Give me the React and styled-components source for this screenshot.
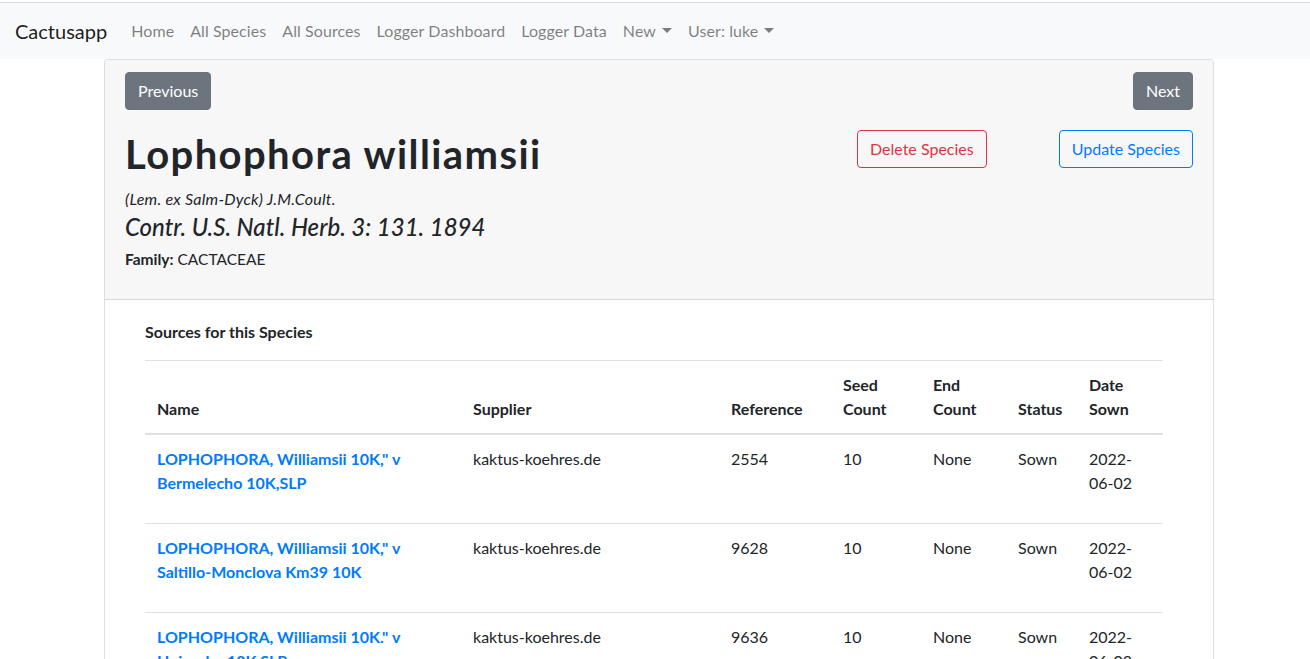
import React from "react";
import styled, { createGlobalStyle, css } from "styled-components";

const Global = createGlobalStyle`
  html, body { margin: 0; padding: 0; background: #fff; }
  body {
    font-family: Lato, "Noto Sans", "Liberation Sans", sans-serif;
    font-size: 16px;
    line-height: 1.5;
    color: #212529;
  }
  * { box-sizing: border-box; }
`;

const TopRule = styled.div`
  height: 3px;
  border-bottom: 1px solid #dcdcdc;
  background: #fff;
`;

const Navbar = styled.nav`
  display: flex;
  align-items: center;
  height: 56px;
  padding: 8px 16px 8px 15px;
  background: #f8f9fa;
`;

const Brand = styled.a`
  font-size: 20px;
  line-height: 30px;
  color: rgba(0, 0, 0, 0.9);
  margin-right: 16px;
  text-decoration: none;
`;

const NavList = styled.div`
  display: flex;
  align-items: center;
`;

const NavLink = styled.a`
  padding: 8px;
  color: rgba(0, 0, 0, 0.5);
  text-decoration: none;
  white-space: nowrap;
  display: inline-flex;
  align-items: center;
  letter-spacing: 0.08px;
`;

const Caret = styled.span`
  display: inline-block;
  margin-left: 6px;
  border-top: 5px solid;
  border-left: 5px solid transparent;
  border-right: 5px solid transparent;
  height: 0;
  width: 0;
  position: relative;
  top: -1px;
`;

const Container = styled.main`
  width: 1110px;
  margin-left: 104px;
`;

const Card = styled.section`
  border: 1px solid rgba(0, 0, 0, 0.125);
  border-radius: 4px;
  background: #fff;
  overflow: hidden;
`;

const CardHeader = styled.header`
  background: #f7f7f7;
  border-bottom: 1px solid rgba(0, 0, 0, 0.125);
  padding: 12px 20px 12px 20px;
`;

const NavRow = styled.div`
  display: flex;
  justify-content: space-between;
`;

const Button = styled.button`
  font-family: inherit;
  font-size: 16px;
  line-height: 24px;
  padding: 6px 12px;
  border-radius: 4px;
  border: 1px solid transparent;
  cursor: pointer;
  ${(p) =>
    p.$variant === "secondary" &&
    css`
      background: #6c757d;
      border-color: #6c757d;
      color: #fff;
    `}
  ${(p) =>
    p.$variant === "outline-danger" &&
    css`
      background: transparent;
      border-color: #dc3545;
      color: #dc3545;
    `}
  ${(p) =>
    p.$variant === "outline-primary" &&
    css`
      background: transparent;
      border-color: #007bff;
      color: #007bff;
    `}
`;

const TitleRow = styled.div`
  display: grid;
  grid-template-columns: 732px 153px 183px;
  margin-top: 20px;
`;

const TitleCol = styled.div``;

const ActionCol = styled.div`
  display: flex;
  justify-content: ${(p) => (p.$end ? "flex-end" : "flex-start")};
  align-items: flex-start;
`;

const Title = styled.h1`
  margin: 0;
  font-size: 40px;
  line-height: 48px;
  font-weight: 700;
  letter-spacing: 1.4px;
  color: #212529;
`;

const Author = styled.p`
  margin: 10px 0 0;
  font-size: 16px;
  line-height: 21px;
  font-style: italic;
  letter-spacing: 0.25px;
`;

const Publication = styled.h4`
  margin: 3px 0 8px;
  font-size: 24px;
  line-height: 29px;
  font-weight: 500;
  font-style: italic;
`;

const Family = styled.p`
  margin: 0 0 17px;
  font-size: 15.5px;
  line-height: 21px;
`;

const CardBody = styled.div`
  padding: 20px 49px 20px 40px;
`;

const SectionTitle = styled.h6`
  margin: 0 0 16px;
  font-size: 16px;
  line-height: 24px;
  font-weight: 700;
`;

const Table = styled.table`
  width: 1018px;
  border-collapse: collapse;
  table-layout: fixed;
`;

const Th = styled.th`
  text-align: left;
  vertical-align: bottom;
  padding: 12px;
  font-weight: 700;
  border-top: 1px solid #dee2e6;
  border-bottom: 2px solid #dee2e6;
  width: ${(p) => p.$w}px;
`;

const Td = styled.td`
  vertical-align: top;
  padding: 12px;
  border-top: 1px solid #dee2e6;
  font-size: 16px;
`;

const NameLink = styled.a`
  display: block;
  margin-bottom: 16px;
  color: #007bff;
  font-weight: 700;
  text-decoration: none;
`;

const columns = [
  { label: "Name", w: 316 },
  { label: "Supplier", w: 258 },
  { label: "Reference", w: 112 },
  { label: "Seed Count", w: 90 },
  { label: "End Count", w: 85 },
  { label: "Status", w: 71 },
  { label: "Date Sown", w: 86 },
];

const rows = [
  {
    name: 'LOPHOPHORA, Williamsii 10K," v Bermelecho 10K,SLP',
    supplier: "kaktus-koehres.de",
    ref: "2554",
  },
  {
    name: 'LOPHOPHORA, Williamsii 10K," v Saltillo-Monclova Km39 10K',
    supplier: "kaktus-koehres.de",
    ref: "9628",
  },
  {
    name: 'LOPHOPHORA, Williamsii 10K." v Huizache 10K,SLP',
    supplier: "kaktus-koehres.de",
    ref: "9636",
  },
];

export default function App() {
  return (
    <>
      <Global />
      <TopRule />
      <Navbar>
        <Brand href="#">Cactusapp</Brand>
        <NavList>
          <NavLink href="#">Home</NavLink>
          <NavLink href="#">All Species</NavLink>
          <NavLink href="#">All Sources</NavLink>
          <NavLink href="#">Logger Dashboard</NavLink>
          <NavLink href="#">Logger Data</NavLink>
          <NavLink href="#">
            New
            <Caret />
          </NavLink>
          <NavLink href="#">
            User: luke
            <Caret />
          </NavLink>
        </NavList>
      </Navbar>
      <Container>
        <Card>
          <CardHeader>
            <NavRow>
              <Button $variant="secondary">Previous</Button>
              <Button $variant="secondary">Next</Button>
            </NavRow>
            <TitleRow>
              <TitleCol>
                <Title>Lophophora williamsii</Title>
                <Author>(Lem. ex Salm-Dyck) J.M.Coult.</Author>
                <Publication>Contr. U.S. Natl. Herb. 3: 131. 1894</Publication>
                <Family>
                  <strong>Family:</strong> CACTACEAE
                </Family>
              </TitleCol>
              <ActionCol>
                <Button $variant="outline-danger">Delete Species</Button>
              </ActionCol>
              <ActionCol $end>
                <Button $variant="outline-primary">Update Species</Button>
              </ActionCol>
            </TitleRow>
          </CardHeader>
          <CardBody>
            <SectionTitle>Sources for this Species</SectionTitle>
            <Table>
              <thead>
                <tr>
                  {columns.map((c) => (
                    <Th key={c.label} $w={c.w}>
                      {c.label}
                    </Th>
                  ))}
                </tr>
              </thead>
              <tbody>
                {rows.map((r) => (
                  <tr key={r.ref}>
                    <Td>
                      <NameLink href="#">{r.name}</NameLink>
                    </Td>
                    <Td>{r.supplier}</Td>
                    <Td>{r.ref}</Td>
                    <Td>10</Td>
                    <Td>None</Td>
                    <Td>Sown</Td>
                    <Td>2022-06-02</Td>
                  </tr>
                ))}
              </tbody>
            </Table>
          </CardBody>
        </Card>
      </Container>
    </>
  );
}
